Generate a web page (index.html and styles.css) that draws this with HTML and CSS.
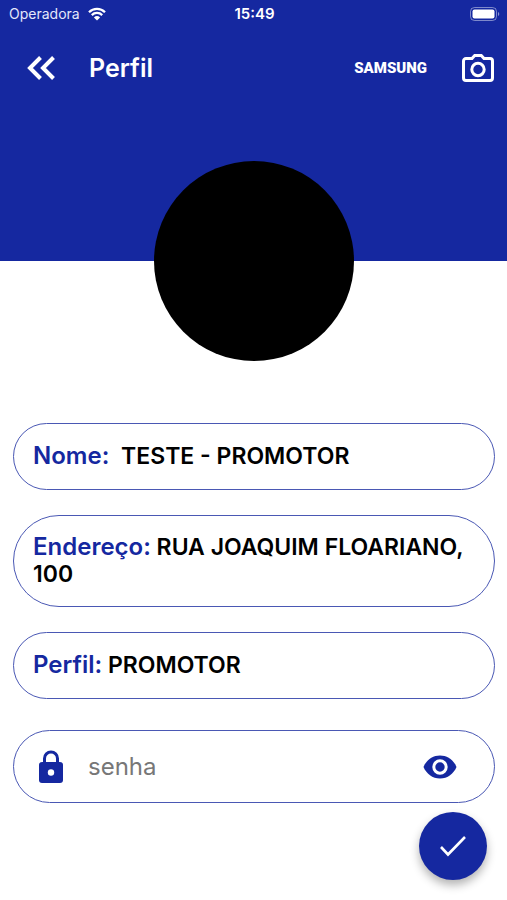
FILE: index.html
```html
<!DOCTYPE html>
<html lang="pt-BR">
<head>
    <meta charset="UTF-8">
    <meta name="viewport" content="width=device-width, initial-scale=1.0">
    <title>Perfil</title>
    <link rel="stylesheet" href="styles.css">
</head>
<body>
    <header class="header">
        <div class="status-bar">
            <div class="carrier">
                <span>Operadora</span>
                <svg class="wifi" viewBox="0 0 18 14" aria-hidden="true">
                    <path d="M1 5.2a11.4 11.4 0 0 1 16 0M3.8 8.1a7.4 7.4 0 0 1 10.4 0" fill="none" stroke="currentColor" stroke-width="2.3"/>
                    <path d="M5.9 10.4a4.5 4.5 0 0 1 6.2 0L9 13.6z" fill="currentColor"/>
                </svg>
            </div>
            <span class="clock">15:49</span>
            <svg class="battery" viewBox="0 0 30 14" aria-hidden="true">
                <rect x=".5" y=".5" width="26" height="13" rx="4" fill="none" stroke="#fff" stroke-opacity=".45"/>
                <rect x="2.5" y="2.5" width="22" height="9" rx="2" fill="#fff"/>
                <path d="M28 5v4a2.2 2.2 0 0 0 0-4z" fill="#fff" fill-opacity=".5"/>
            </svg>
        </div>
        <nav class="toolbar">
            <button class="icon-button" type="button" aria-label="Voltar">
                <svg class="back-icon" viewBox="0 0 28 24" aria-hidden="true">
                    <path d="M13.500 1.500L3 12l10.500 10.500M26.500 1.500L16 12l10.500 10.500" fill="none" stroke="currentColor" stroke-width="4"/>
                </svg>
            </button>
            <h1 class="title">Perfil</h1>
            <span class="brand">SAMSUNG</span>
            <button class="icon-button" type="button" aria-label="Trocar foto">
                <svg class="camera-icon" viewBox="0 0 32 28" aria-hidden="true">
                    <path d="M4 4.500h6l2.700-3h6.600l2.700 3h6A2.500 2.500 0 0 1 30.500 7v17a2.500 2.500 0 0 1-2.500 2.500H4A2.500 2.500 0 0 1 1.500 24V7A2.500 2.500 0 0 1 4 4.500z" fill="none" stroke="currentColor" stroke-width="3"/>
                    <circle cx="16" cy="15.500" r="6.200" fill="none" stroke="currentColor" stroke-width="3"/>
                </svg>
            </button>
        </nav>
    </header>

    <main class="content">
        <div class="avatar"></div>

        <form class="profile" action="#" method="post">
            <p class="field"><span class="label name-label">Nome:</span> TESTE - PROMOTOR</p>
            <p class="field address"><span class="label">Endereço:</span> RUA JOAQUIM FLOARIANO, 100</p>
            <p class="field"><span class="label">Perfil:</span> PROMOTOR</p>

            <div class="password">
                <label for="senha" aria-label="Senha">
                    <svg class="lock-icon" viewBox="0 0 26 34" aria-hidden="true">
                        <path d="M6.500 13V8.500a6.500 6.500 0 0 1 13 0V13" fill="none" stroke="currentColor" stroke-width="3"/>
                        <rect x="1" y="12" width="24" height="21" rx="3" fill="currentColor"/>
                        <circle cx="13" cy="22.500" r="3.200" fill="#fff"/>
                    </svg>
                </label>
                <input type="password" id="senha" name="senha" placeholder="senha">
                <button class="icon-button" type="button" aria-label="Mostrar senha">
                    <svg class="eye-icon" viewBox="0 0 34 24" aria-hidden="true">
                        <path d="M17 .5C9.500 .5 3.200 5.300 .5 12c2.700 6.700 9 11.500 16.500 11.500S30.800 18.700 33.500 12C30.800 5.300 24.500 .5 17 .5z" fill="currentColor"/>
                        <circle cx="17" cy="12" r="6.200" fill="currentColor" stroke="#fff" stroke-width="3"/>
                    </svg>
                </button>
            </div>

            <button class="confirm" type="submit" aria-label="Salvar">
                <svg class="check-icon" viewBox="0 0 28 22" aria-hidden="true">
                    <path d="M2 12l7 7.500L26 2" fill="none" stroke="currentColor" stroke-width="2.600"/>
                </svg>
            </button>
        </form>
    </main>
</body>
</html>
```

FILE: styles.css
```css
* {
    box-sizing: border-box;
}
body {
    margin: 0;
    background-color: #fff;
    color: #000;
    font-family: Inter, "Liberation Sans", sans-serif;
}
svg {
    display: block;
}
.header {
    height: 261px;
    background-color: #1528a0;
    color: #fff;
}
.status-bar {
    display: grid;
    grid-template-columns: 1fr auto 1fr;
    align-items: center;
    height: 27px;
    padding: 0 7px 0 9px;
    font-size: 14px;
}
.carrier {
    display: flex;
    align-items: center;
    gap: 8px;
    color: #e4e7fa;
}
.wifi {
    width: 18px;
    height: 14px;
    color: #fff;
}
.clock {
    font-size: 15px;
    font-weight: 600;
}
.battery {
    justify-self: end;
    width: 30px;
    height: 14px;
}
.toolbar {
    display: flex;
    align-items: center;
    height: 82px;
    padding: 0 13px 0 27px;
}
.icon-button {
    padding: 0;
    border: none;
    background: none;
    color: inherit;
    cursor: pointer;
}
.back-icon {
    width: 28px;
    height: 24px;
}
.title {
    flex: 1;
    margin: 0 0 0 34px;
    font-size: 25px;
    font-weight: 600;
}
.brand {
    margin-right: 35px;
    font-family: Roboto, sans-serif;
    font-size: 15px;
    font-weight: 900;
}
.camera-icon {
    width: 32px;
    height: 28px;
}
.avatar {
    width: 200px;
    height: 200px;
    margin: -100px auto 62px;
    border-radius: 50%;
    background-color: #000;
}
.profile {
    display: flex;
    flex-direction: column;
    gap: 25px;
    padding: 0 12px 20px 13px;
}
.field {
    margin: 0;
    padding: 19px;
    border: 1px solid #4a58b4;
    border-radius: 46px;
    font-size: 23px;
    font-weight: 600;
    line-height: 27px;
}
.address {
    padding: 18px 19px;
}
.label {
    color: #1528a0;
    font-size: 24px;
    line-height: 24px;
}
.name-label {
    margin-right: 6px;
}
.password {
    display: flex;
    align-items: center;
    height: 73px;
    margin-top: 6px;
    padding: 0 37px 0 24px;
    border: 1px solid #4a58b4;
    border-radius: 37px;
    color: #1528a0;
}
.lock-icon {
    width: 26px;
    height: 34px;
}
.password input {
    flex: 1;
    min-width: 0;
    padding: 0 24px;
    border: none;
    outline: none;
    background: none;
    font-family: inherit;
    font-size: 24px;
}
.password input::placeholder {
    color: #777;
}
.eye-icon {
    width: 34px;
    height: 24px;
}
.confirm {
    display: flex;
    align-items: center;
    justify-content: center;
    align-self: flex-end;
    width: 68px;
    height: 68px;
    margin: -16px 8px 0 0;
    padding: 0;
    border: none;
    border-radius: 50%;
    background-color: #1528a0;
    color: #fff;
    box-shadow: 0 5px 10px rgba(0, 0, 0, 0.3);
    cursor: pointer;
}
.check-icon {
    width: 28px;
    height: 22px;
}
```
